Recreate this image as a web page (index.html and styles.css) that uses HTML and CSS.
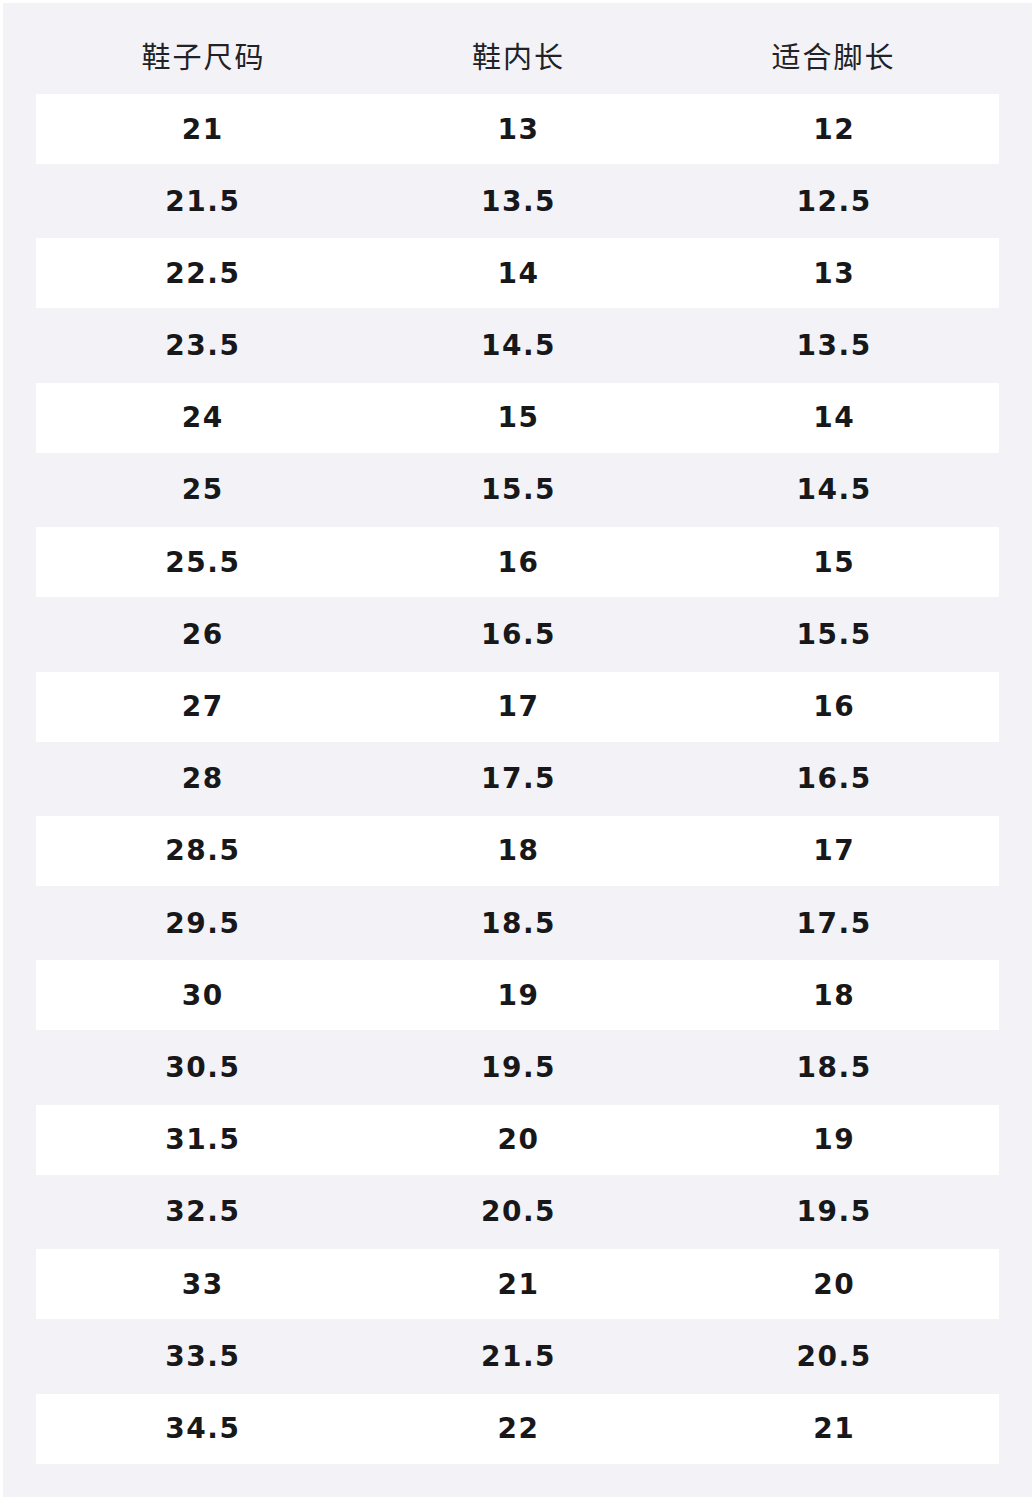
FILE: index.html
```html
<!DOCTYPE html>
<html lang="zh">
<head>
<meta charset="utf-8">
<title>鞋子尺码表</title>
<link rel="stylesheet" href="styles.css">
</head>
<body>
<div class="panel">
  <div class="head">
    <div class="cell">鞋子尺码</div>
    <div class="cell">鞋内长</div>
    <div class="cell">适合脚长</div>
  </div>
  <div class="rows">
    <div class="row light"><div class="cell">21</div><div class="cell">13</div><div class="cell">12</div></div>
    <div class="row"><div class="cell">21.5</div><div class="cell">13.5</div><div class="cell">12.5</div></div>
    <div class="row light"><div class="cell">22.5</div><div class="cell">14</div><div class="cell">13</div></div>
    <div class="row"><div class="cell">23.5</div><div class="cell">14.5</div><div class="cell">13.5</div></div>
    <div class="row light"><div class="cell">24</div><div class="cell">15</div><div class="cell">14</div></div>
    <div class="row"><div class="cell">25</div><div class="cell">15.5</div><div class="cell">14.5</div></div>
    <div class="row light"><div class="cell">25.5</div><div class="cell">16</div><div class="cell">15</div></div>
    <div class="row"><div class="cell">26</div><div class="cell">16.5</div><div class="cell">15.5</div></div>
    <div class="row light"><div class="cell">27</div><div class="cell">17</div><div class="cell">16</div></div>
    <div class="row"><div class="cell">28</div><div class="cell">17.5</div><div class="cell">16.5</div></div>
    <div class="row light"><div class="cell">28.5</div><div class="cell">18</div><div class="cell">17</div></div>
    <div class="row"><div class="cell">29.5</div><div class="cell">18.5</div><div class="cell">17.5</div></div>
    <div class="row light"><div class="cell">30</div><div class="cell">19</div><div class="cell">18</div></div>
    <div class="row"><div class="cell">30.5</div><div class="cell">19.5</div><div class="cell">18.5</div></div>
    <div class="row light"><div class="cell">31.5</div><div class="cell">20</div><div class="cell">19</div></div>
    <div class="row"><div class="cell">32.5</div><div class="cell">20.5</div><div class="cell">19.5</div></div>
    <div class="row light"><div class="cell">33</div><div class="cell">21</div><div class="cell">20</div></div>
    <div class="row"><div class="cell">33.5</div><div class="cell">21.5</div><div class="cell">20.5</div></div>
    <div class="row light"><div class="cell">34.5</div><div class="cell">22</div><div class="cell">21</div></div>
  </div>
</div>
</body>
</html>
```
FILE: styles.css
```css
html, body {
  margin: 0;
  padding: 0;
  background: #ffffff;
}

.panel {
  margin: 3px;
  height: 1494px;
  box-sizing: border-box;
  background: #f3f3f7;
  padding: 0 33px;
  color: #1b1b1d;
}

.head {
  display: grid;
  grid-template-columns: repeat(3, 1fr);
  padding: 32px 8px 19px 10px;
  font-family: "Noto Sans CJK SC", "Noto Sans", sans-serif;
  font-size: 29px;
  font-weight: 400;
  line-height: 40px;
  letter-spacing: 2px;
  color: #222226;
}

.cell {
  text-align: center;
}

.rows {
  display: flex;
  flex-direction: column;
}

.row {
  display: grid;
  grid-template-columns: repeat(3, 1fr);
  align-items: center;
  height: 74.4px;
  padding: 0 7px 0 9px;
  font-family: "DejaVu Sans", sans-serif;
  font-weight: 700;
  font-size: 28px;
  letter-spacing: 1.5px;
  color: #18181a;
}

.row.light {
  height: 70px;
  background: #ffffff;
}
```
